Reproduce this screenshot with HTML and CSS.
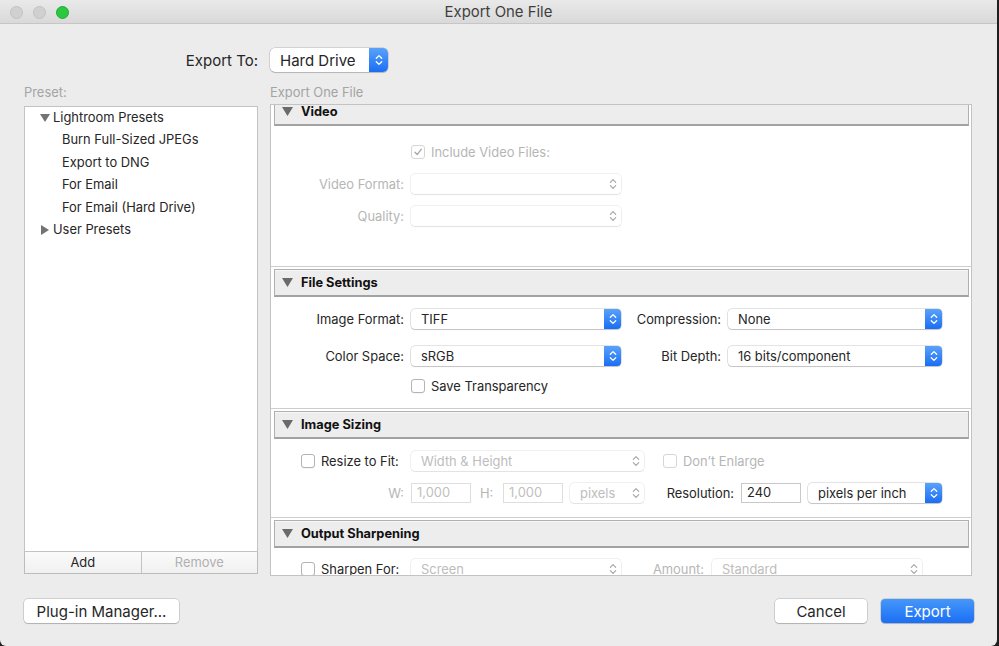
FILE: index.html
```html
<!DOCTYPE html>
<html>
<head>
<meta charset="utf-8">
<title>Export One File</title>
<link rel="stylesheet" href="styles.css">
</head>
<body>
<div class="window">
  <div class="titlebar">
    <div class="lights"><span class="light off"></span><span class="light off"></span><span class="light green"></span></div>
    <div class="title">Export One File</div>
    <div></div>
  </div>
  <div class="content">
    <div class="export-to">
      <span class="big-label">Export To:</span>
      <div class="popup big active"><span class="val">Hard Drive</span><span class="stepper"><svg width="8" height="14" viewBox="0 0 8 14"><path d="M1.3 5.3L4 2.6L6.7 5.3M1.3 8.7L4 11.4L6.7 8.7"/></svg></span></div>
    </div>
    <div class="main">
      <div class="left-col">
        <div class="caption">Preset:</div>
        <div class="preset-list">
          <ul>
            <li class="folder"><svg class="tri" width="10" height="8" viewBox="0 0 10 8"><path d="M0 0H10L5 8Z"/></svg>Lightroom Presets</li>
            <li class="child">Burn Full-Sized JPEGs</li>
            <li class="child">Export to DNG</li>
            <li class="child">For Email</li>
            <li class="child">For Email (Hard Drive)</li>
            <li class="folder"><svg class="tri" width="10" height="10" viewBox="0 0 10 10"><path d="M1 0L9 5L1 10Z"/></svg>User Presets</li>
          </ul>
        </div>
        <div class="list-buttons"><button class="lb">Add</button><button class="lb off">Remove</button></div>
      </div>
      <div class="right-col">
        <div class="caption">Export One File</div>
        <div class="scroll">
          <div class="scroll-inner">
            <section class="panel">
              <div class="panel-head"><svg class="htri" width="11" height="9" viewBox="0 0 11 9"><path d="M0 0H11L5.5 9Z"/></svg>Video</div>
              <div class="panel-body body-video">
                <div class="row">
                  <span class="lbl"></span>
                  <span class="check on dis"><svg width="10" height="10" viewBox="0 0 10 10"><path d="M2 5.3L4.2 7.6L8.3 2.2"/></svg></span>
                  <span class="check-text dis">Include Video Files:</span>
                </div>
                <div class="row gap12">
                  <span class="lbl dis">Video Format:</span>
                  <div class="popup dis w210"><span class="val"></span><span class="stepper"><svg width="8" height="14" viewBox="0 0 8 14"><path d="M1.3 5.3L4 2.6L6.7 5.3M1.3 8.7L4 11.4L6.7 8.7"/></svg></span></div>
                </div>
                <div class="row gap12">
                  <span class="lbl dis">Quality:</span>
                  <div class="popup dis w210"><span class="val"></span><span class="stepper"><svg width="8" height="14" viewBox="0 0 8 14"><path d="M1.3 5.3L4 2.6L6.7 5.3M1.3 8.7L4 11.4L6.7 8.7"/></svg></span></div>
                </div>
              </div>
            </section>
            <section class="panel">
              <div class="panel-head"><svg class="htri" width="11" height="9" viewBox="0 0 11 9"><path d="M0 0H11L5.5 9Z"/></svg>File Settings</div>
              <div class="panel-body body-file">
                <div class="row">
                  <span class="lbl">Image Format:</span>
                  <div class="popup active w210"><span class="val">TIFF</span><span class="stepper"><svg width="8" height="14" viewBox="0 0 8 14"><path d="M1.3 5.3L4 2.6L6.7 5.3M1.3 8.7L4 11.4L6.7 8.7"/></svg></span></div>
                  <span class="lbl2">Compression:</span>
                  <div class="popup active w214"><span class="val">None</span><span class="stepper"><svg width="8" height="14" viewBox="0 0 8 14"><path d="M1.3 5.3L4 2.6L6.7 5.3M1.3 8.7L4 11.4L6.7 8.7"/></svg></span></div>
                </div>
                <div class="row gap17">
                  <span class="lbl">Color Space:</span>
                  <div class="popup active w210"><span class="val">sRGB</span><span class="stepper"><svg width="8" height="14" viewBox="0 0 8 14"><path d="M1.3 5.3L4 2.6L6.7 5.3M1.3 8.7L4 11.4L6.7 8.7"/></svg></span></div>
                  <span class="lbl2">Bit Depth:</span>
                  <div class="popup active w214"><span class="val">16 bits/component</span><span class="stepper"><svg width="8" height="14" viewBox="0 0 8 14"><path d="M1.3 5.3L4 2.6L6.7 5.3M1.3 8.7L4 11.4L6.7 8.7"/></svg></span></div>
                </div>
                <div class="row gap10">
                  <span class="lbl"></span>
                  <span class="check"></span>
                  <span class="check-text">Save Transparency</span>
                </div>
              </div>
            </section>
            <section class="panel">
              <div class="panel-head"><svg class="htri" width="11" height="9" viewBox="0 0 11 9"><path d="M0 0H11L5.5 9Z"/></svg>Image Sizing</div>
              <div class="panel-body body-size">
                <div class="row">
                  <span class="lbl left"><span class="check"></span><span class="check-text">Resize to Fit:</span></span>
                  <div class="popup dis w233"><span class="val">Width &amp; Height</span><span class="stepper"><svg width="8" height="14" viewBox="0 0 8 14"><path d="M1.3 5.3L4 2.6L6.7 5.3M1.3 8.7L4 11.4L6.7 8.7"/></svg></span></div>
                  <span class="check dis ml19"></span>
                  <span class="check-text dis">Don’t Enlarge</span>
                </div>
                <div class="row gap13">
                  <span class="lbl dis">W:</span>
                  <span class="field dis">1,000</span>
                  <span class="hlbl dis">H:</span>
                  <span class="field dis">1,000</span>
                  <div class="popup dis w74 ml7"><span class="val">pixels</span><span class="stepper"><svg width="8" height="14" viewBox="0 0 8 14"><path d="M1.3 5.3L4 2.6L6.7 5.3M1.3 8.7L4 11.4L6.7 8.7"/></svg></span></div>
                  <span class="lbl3">Resolution:</span>
                  <span class="field">240</span>
                  <div class="popup active w134 ml7"><span class="val">pixels per inch</span><span class="stepper"><svg width="8" height="14" viewBox="0 0 8 14"><path d="M1.3 5.3L4 2.6L6.7 5.3M1.3 8.7L4 11.4L6.7 8.7"/></svg></span></div>
                </div>
              </div>
            </section>
            <section class="panel">
              <div class="panel-head"><svg class="htri" width="11" height="9" viewBox="0 0 11 9"><path d="M0 0H11L5.5 9Z"/></svg>Output Sharpening</div>
              <div class="panel-body body-sharp">
                <div class="row">
                  <span class="lbl left"><span class="check"></span><span class="check-text">Sharpen For:</span></span>
                  <div class="popup dis w210"><span class="val">Screen</span><span class="stepper"><svg width="8" height="14" viewBox="0 0 8 14"><path d="M1.3 5.3L4 2.6L6.7 5.3M1.3 8.7L4 11.4L6.7 8.7"/></svg></span></div>
                  <span class="lbl4 dis">Amount:</span>
                  <div class="popup dis w210"><span class="val">Standard</span><span class="stepper"><svg width="8" height="14" viewBox="0 0 8 14"><path d="M1.3 5.3L4 2.6L6.7 5.3M1.3 8.7L4 11.4L6.7 8.7"/></svg></span></div>
                </div>
              </div>
            </section>
          </div>
        </div>
      </div>
    </div>
    <div class="footer">
      <button class="btn plug">Plug-in Manager...</button>
      <div class="footer-right">
        <button class="btn cancel">Cancel</button>
        <button class="btn primary">Export</button>
      </div>
    </div>
  </div>
</div>
</body>
</html>
```
FILE: styles.css
```css
html, body {
  margin: 0;
  padding: 0;
}
body {
  background: #1f1f1f;
  font-family: Inter, "Noto Sans", sans-serif;
  font-size: 12.9px;
  color: #262626;
  width: 999px;
  height: 646px;
  overflow: hidden;
}
.window {
  width: 997px;
  height: 646px;
  background: #ececec;
  border-radius: 0 0 6px 6px;
  display: flex;
  flex-direction: column;
}
.titlebar {
  height: 23px;
  border-bottom: 1px solid #c6c6c6;
  background: linear-gradient(#e9e9e9, #d9d9d9);
  display: grid;
  grid-template-columns: 1fr auto 1fr;
  align-items: center;
}
.lights {
  display: flex;
  gap: 10px;
  padding-left: 9.5px;
  padding-top: 1px;
}
.light {
  width: 13px;
  height: 13px;
  border-radius: 50%;
  box-sizing: border-box;
}
.light.off {
  background: #d0d0d0;
  border: 1px solid #c2c2c2;
}
.light.green {
  background: #2bc840;
  border: 1px solid #22a934;
}
.title {
  font-size: 14.9px;
  color: #3f3f3f;
}
.content {
  padding: 0 23px 0 24px;
  flex: 1;
  display: flex;
  flex-direction: column;
}
.export-to {
  margin-top: 24px;
  display: flex;
  align-items: center;
  height: 24px;
}
.big-label {
  width: 234px;
  margin-right: 12px;
  text-align: right;
  font-size: 15px;
  color: #262626;
}
.main {
  display: flex;
  gap: 12px;
  margin-top: 12px;
}
.caption {
  height: 16px;
  line-height: 18px;
  color: #a4a4a4;
}
.left-col {
  width: 234px;
  display: flex;
  flex-direction: column;
}
.preset-list {
  margin-top: 6px;
  height: 446px;
  box-sizing: border-box;
  border: 1px solid #c3c3c3;
  background: #fff;
}
.preset-list ul {
  list-style: none;
  margin: 0;
  padding: 0;
}
.preset-list li {
  height: 22.4px;
  line-height: 22.4px;
  white-space: nowrap;
}
.preset-list .folder {
  display: flex;
  align-items: center;
  padding-left: 15px;
}
.preset-list .tri {
  fill: #737373;
  margin-right: 3px;
}
.preset-list .child {
  padding-left: 37px;
}
.list-buttons {
  display: flex;
  height: 22px;
  box-sizing: border-box;
  border: 1px solid #bcbcbc;
  border-top: none;
}
.lb {
  flex: 1;
  font: inherit;
  color: #262626;
  border: none;
  background: linear-gradient(#fbfbfb, #f0f0f0);
  padding: 0;
}
.lb:first-child {
  border-right: 1px solid #c3c3c3;
}
.lb.off {
  color: #b1b1b1;
}
.right-col {
  width: 702px;
  display: flex;
  flex-direction: column;
}
.scroll {
  margin-top: 4px;
  height: 472px;
  box-sizing: border-box;
  border: 1px solid #c3c3c3;
  background: #fff;
  overflow: hidden;
}
.scroll-inner {
  margin-top: -9px;
}
.panel {
  padding-top: 2px;
  border-bottom: 1px solid #cdcdcd;
}
.panel-head {
  height: 28px;
  box-sizing: border-box;
  margin: 0 2px 0 3px;
  border: 1px solid #b0b0b0;
  border-bottom: 2px solid #a2a2a2;
  background: #ededed;
  box-shadow: inset 0 1px 0 #f8f8f8;
  display: flex;
  align-items: center;
  padding-left: 7px;
  font-weight: 700;
  color: #111;
  font-size: 12.8px;
}
.htri {
  fill: #6a6a6a;
  margin-right: 8px;
}
.panel-body {
  box-sizing: border-box;
}
.body-video {
  height: 140px;
  padding-top: 16px;
}
.body-file {
  height: 111px;
  padding-top: 12px;
}
.body-size {
  height: 78px;
  padding-top: 12px;
}
.body-sharp {
  height: 60px;
  padding-top: 11px;
}
.row {
  display: flex;
  align-items: center;
  height: 20px;
  white-space: nowrap;
}
.gap10 { margin-top: 10px; }
.gap12 { margin-top: 12px; }
.gap13 { margin-top: 12px; }
.gap17 { margin-top: 17px; }
.lbl {
  width: 133px;
  margin-right: 7px;
  text-align: right;
  flex: none;
}
.lbl.left {
  display: flex;
  align-items: center;
  text-align: left;
  padding-left: 30px;
  box-sizing: border-box;
}
.lbl2 {
  width: 100px;
  margin-right: 7px;
  text-align: right;
  flex: none;
}
.lbl3 {
  width: 90px;
  margin-right: 7px;
  text-align: right;
  flex: none;
}
.lbl4 {
  width: 83px;
  margin-right: 8px;
  text-align: right;
  flex: none;
}
.hlbl {
  width: 32px;
  padding-left: 9px;
  box-sizing: border-box;
  flex: none;
}
.dis {
  color: #b6b6b6;
}
.check {
  width: 14px;
  height: 14px;
  box-sizing: border-box;
  border: 1px solid #b4b4b4;
  border-radius: 3px;
  background: #fff;
  box-shadow: 0 0.5px 0.5px rgba(0,0,0,0.08);
  flex: none;
  display: flex;
  align-items: center;
  justify-content: center;
  margin-right: 6px;
}
.check.dis {
  border-color: #d6d6d6;
  box-shadow: none;
}
.check svg path {
  fill: none;
  stroke: #a9a9a9;
  stroke-width: 1.4;
  stroke-linecap: round;
  stroke-linejoin: round;
}
.ml19 { margin-left: 19px; }
.ml7 { margin-left: 7px; }
.popup {
  height: 20px;
  box-sizing: border-box;
  display: flex;
  align-items: center;
  background: #fff;
  border-radius: 4px;
  box-shadow: 0 0 0 0.5px rgba(0,0,0,0.22), 0 1px 1px rgba(0,0,0,0.14);
  padding-left: 10px;
  flex: none;
}
.popup .val {
  flex: 1;
  overflow: hidden;
}
.popup .stepper {
  width: 17px;
  height: 100%;
  display: flex;
  align-items: center;
  justify-content: center;
  border-radius: 0 4px 4px 0;
}
.popup svg path {
  fill: none;
  stroke: #fff;
  stroke-width: 1.3;
  stroke-linecap: round;
  stroke-linejoin: round;
}
.popup.active .stepper {
  background: linear-gradient(#59a2fa, #1b6ef4);
}
.popup.dis {
  box-shadow: 0 0 0 0.5px rgba(0,0,0,0.12), 0 1px 1px rgba(0,0,0,0.06);
  color: #bdbdbd;
}
.popup.dis svg path {
  stroke: #a4a4a4;
  stroke-width: 1.1;
}
.popup.big {
  height: 24px;
  width: 118px;
  font-size: 15px;
  border-radius: 5px;
}
.popup.big .stepper {
  width: 19px;
  border-radius: 0 5px 5px 0;
}
.w210 { width: 210px; }
.w214 { width: 214px; }
.w233 { width: 233px; }
.w74 { width: 74px; }
.w134 { width: 134px; }
.field {
  width: 60px;
  height: 20px;
  box-sizing: border-box;
  border: 1px solid #c9c9c9;
  background: #fff;
  padding-left: 5px;
  line-height: 18px;
  flex: none;
}
.field.dis {
  border-color: #dedede;
  color: #c0c0c0;
}
.footer {
  margin-top: 23px;
  display: flex;
  justify-content: space-between;
  align-items: center;
}
.footer-right {
  display: flex;
  gap: 14px;
}
.btn {
  height: 24px;
  font-family: inherit;
  font-size: 15px;
  color: #262626;
  background: #fff;
  border: none;
  border-radius: 4px;
  box-shadow: 0 0 0 0.5px rgba(0,0,0,0.24), 0 1px 1px rgba(0,0,0,0.15);
  padding: 0;
}
.plug { width: 155px; }
.cancel { width: 92px; }
.primary {
  width: 93px;
  color: #fff;
  background: linear-gradient(#4697f9, #1a6ff5);
}
```
